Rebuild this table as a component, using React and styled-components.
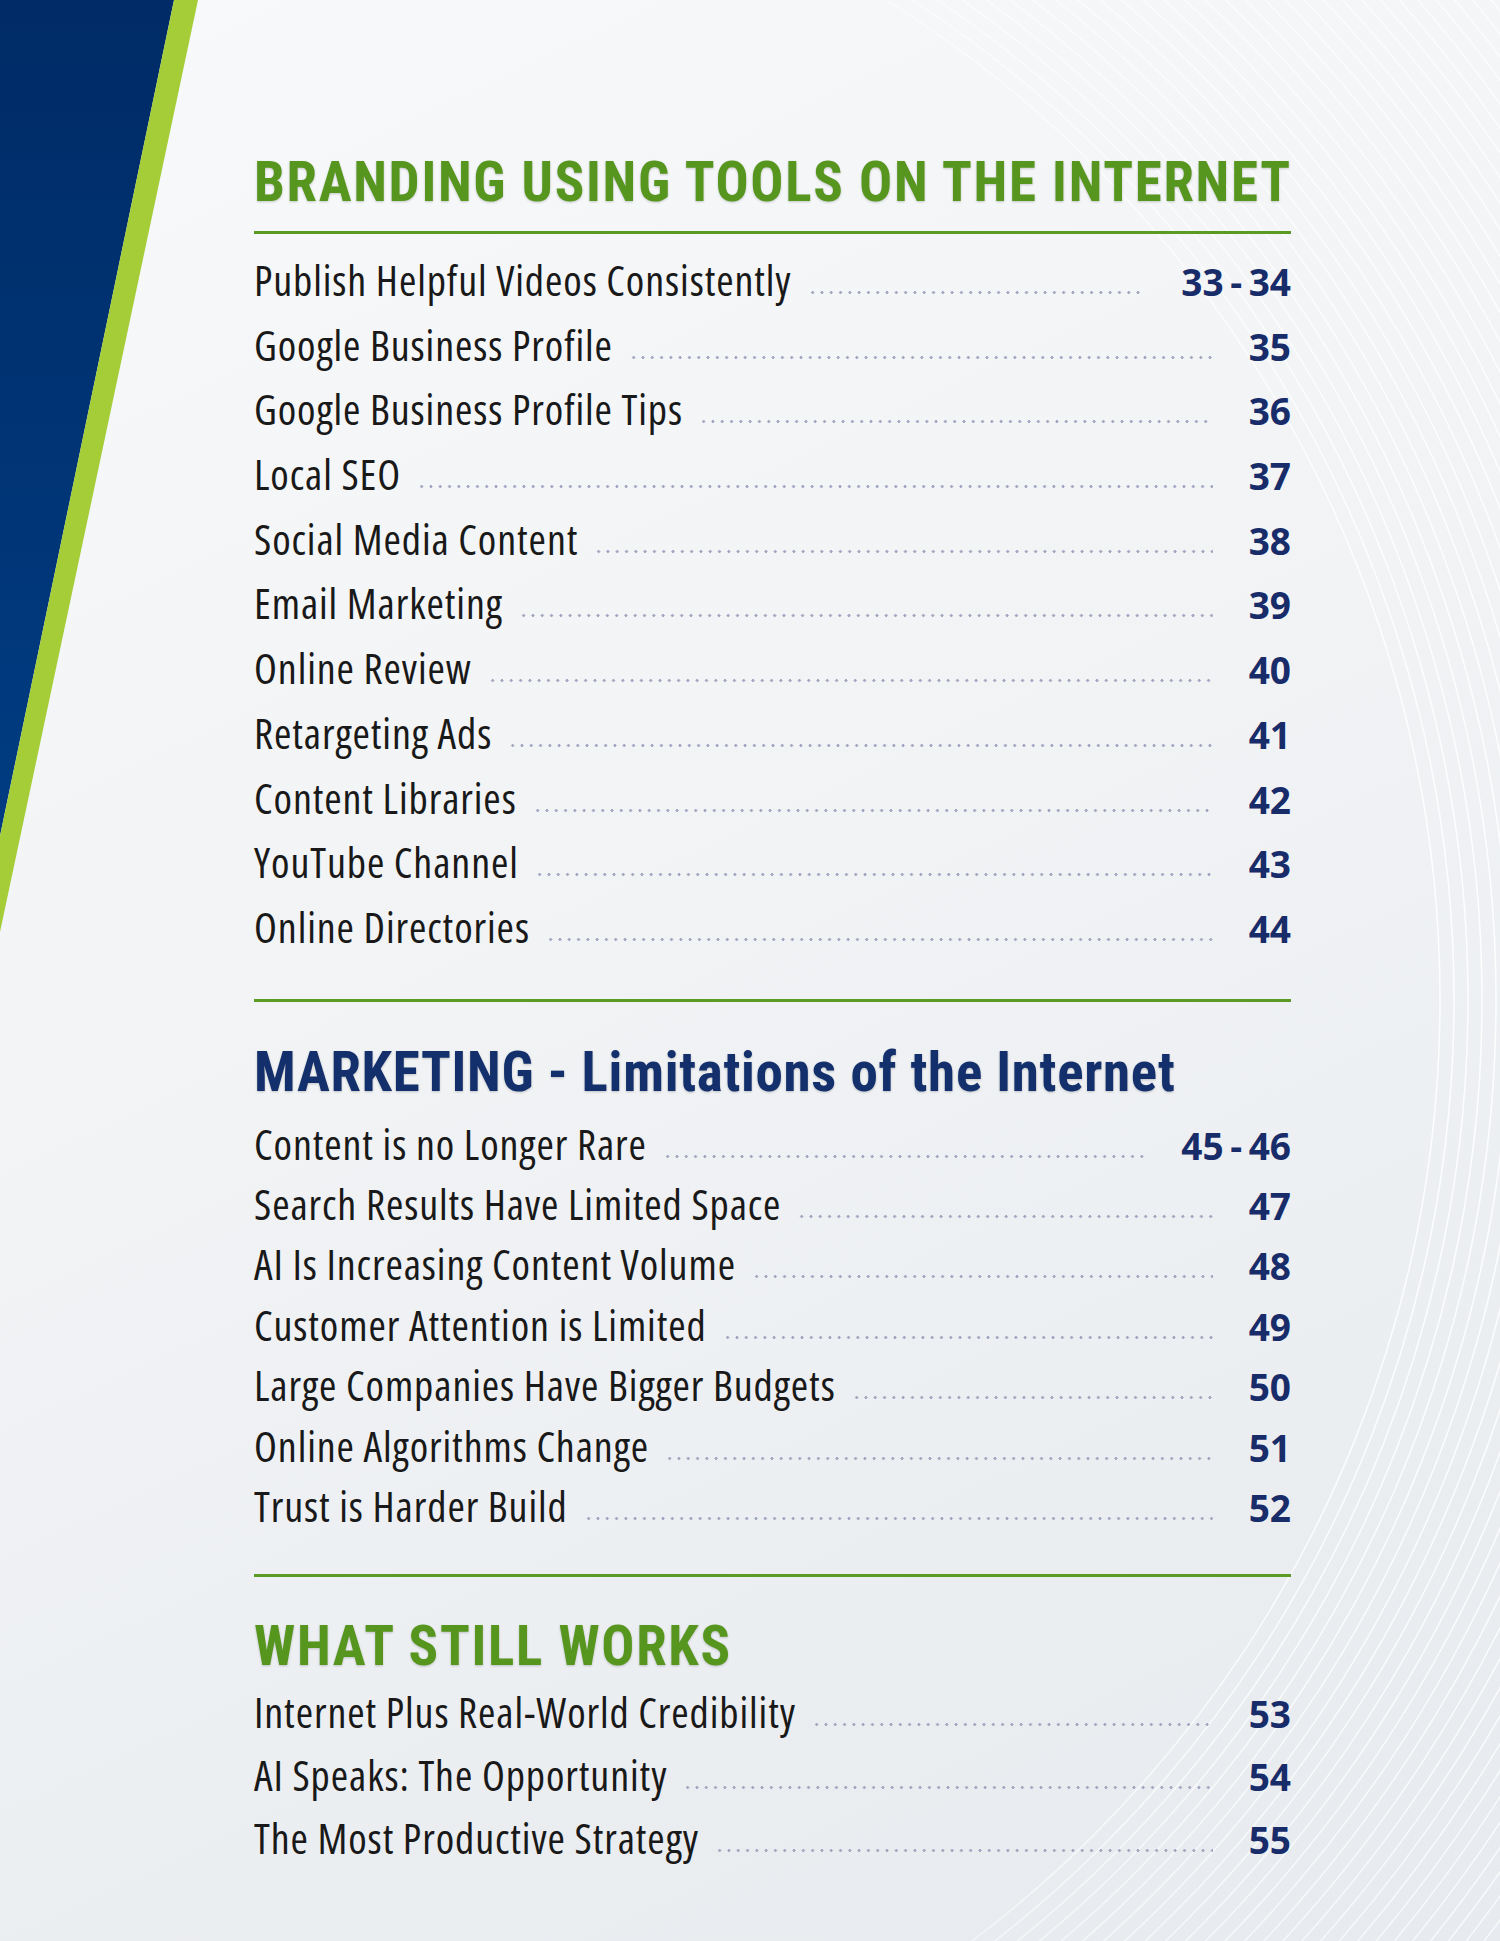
import React from 'react';
import styled, { createGlobalStyle } from 'styled-components';

const GlobalStyle = createGlobalStyle`
  html, body { margin: 0; padding: 0; }
  body { background: #eef0f3; }
`;

const Page = styled.div`
  position: relative;
  width: 1500px;
  min-height: 1941px;
  overflow: hidden;
  background: linear-gradient(155deg, #f8f9fa 0%, #f1f3f5 45%, #e7eaee 100%);
  font-family: "Open Sans", "Noto Sans", sans-serif;
`;

const Decor = styled.svg`
  position: absolute;
  top: 0;
  left: 0;
  pointer-events: none;
`;

const Content = styled.main`
  position: relative;
  width: 1037px;
  margin-left: 254px;
  padding-top: 155px;
`;

const Heading = styled.h2`
  margin: ${(p) => p.$top || 0}px 0 0;
  font-family: "Roboto Condensed", "Roboto", sans-serif;
  font-stretch: condensed;
  font-size: 55px;
  line-height: 55px;
  font-weight: 700;
  letter-spacing: ${(p) => p.$track}px;
  white-space: nowrap;
  color: ${(p) => (p.$navy ? '#13306c' : '#56961e')};
  filter: drop-shadow(0 1px 1px rgba(0, 0, 0, 0.2));
`;

const Rule = styled.hr`
  margin: ${(p) => p.$top}px 0 0;
  border: 0;
  height: 3px;
  background: #5c9b23;
`;

const List = styled.ul`
  list-style: none;
  margin: ${(p) => p.$top}px 0 0;
  padding: 0;
`;

const Row = styled.li`
  display: flex;
  align-items: baseline;
  height: ${(p) => p.$h}px;
  line-height: ${(p) => p.$h}px;
`;

const Title = styled.span`
  font-size: 42px;
  font-stretch: condensed;
  letter-spacing: 0.9px;
  color: #191919;
  white-space: nowrap;
`;

const Leader = styled.span`
  flex: 1;
  height: 7px;
  margin-left: 16px;
  background-image: radial-gradient(circle, #a3a8c2 1.3px, transparent 1.7px);
  background-size: 9.3px 7px;
  background-repeat: repeat-x;
  background-position: left center;
`;

const Pages = styled.span`
  margin-left: 36px;
  font-size: 37px;
  font-weight: 700;
  word-spacing: -3px;
  color: #182c69;
  white-space: nowrap;
`;

const sections = [
  {
    title: 'BRANDING USING TOOLS ON THE INTERNET',
    track: 1.7,
    rowH: 64.7,
    items: [
      ['Publish Helpful Videos Consistently', '33 - 34'],
      ['Google Business Profile', '35'],
      ['Google Business Profile Tips', '36'],
      ['Local SEO', '37'],
      ['Social Media Content', '38'],
      ['Email Marketing', '39'],
      ['Online Review', '40'],
      ['Retargeting Ads', '41'],
      ['Content Libraries', '42'],
      ['YouTube Channel', '43'],
      ['Online Directories', '44'],
    ],
  },
  {
    title: 'MARKETING - Limitations of the Internet',
    navy: true,
    track: 0.7,
    rowH: 60.4,
    items: [
      ['Content is no Longer Rare', '45 - 46'],
      ['Search Results Have Limited Space', '47'],
      ['AI Is Increasing Content Volume', '48'],
      ['Customer Attention is Limited', '49'],
      ['Large Companies Have Bigger Budgets', '50'],
      ['Online Algorithms Change', '51'],
      ['Trust is Harder Build', '52'],
    ],
  },
  {
    title: 'WHAT STILL WORKS',
    track: 1.7,
    rowH: 63,
    items: [
      ['Internet Plus Real-World Credibility', '53'],
      ['AI Speaks: The Opportunity', '54'],
      ['The Most Productive Strategy', '55'],
    ],
  },
];

// vertical gaps (px) for each section: rule above, heading, rule below, list
const gaps = [
  { heading: 0, rule: 21, list: 14 },
  { ruleBefore: 39, heading: 43.5, list: 13.5 },
  { ruleBefore: 38, heading: 41.5, list: 6.5 },
];

function Stripe() {
  return (
    <Decor width="220" height="960" viewBox="0 0 220 960">
      <defs>
        <linearGradient id="blue" x1="0" y1="0" x2="0" y2="1">
          <stop offset="0" stopColor="#002b66" />
          <stop offset="1" stopColor="#003c82" />
        </linearGradient>
      </defs>
      <polygon points="0,0 174,0 0,836" fill="url(#blue)" />
      <polygon points="174,0 198,0 0,932 0,836" fill="#a5cd38" />
    </Decor>
  );
}

function Arcs() {
  const radii = [];
  for (let r = 1180; r < 1760; r += 14) radii.push(r);
  return (
    <Decor width="1500" height="1941" viewBox="0 0 1500 1941">
      <defs>
        <linearGradient id="fade" x1="0" y1="0" x2="1" y2="0">
          <stop offset="0.5" stopColor="#fff" stopOpacity="0" />
          <stop offset="1" stopColor="#fff" stopOpacity="0.9" />
        </linearGradient>
      </defs>
      <g fill="none" stroke="url(#fade)" strokeWidth="1.5">
        {radii.map((r) => (
          <circle key={r} cx="260" cy="1000" r={r} />
        ))}
      </g>
    </Decor>
  );
}

export default function App() {
  return (
    <Page>
      <GlobalStyle />
      <Arcs />
      <Stripe />
      <Content>
        {sections.map((s, i) => (
          <section key={s.title}>
            {gaps[i].ruleBefore && <Rule $top={gaps[i].ruleBefore} />}
            <Heading $navy={s.navy} $track={s.track} $top={gaps[i].heading}>
              {s.title}
            </Heading>
            {gaps[i].rule && <Rule $top={gaps[i].rule} />}
            <List $top={gaps[i].list}>
              {s.items.map(([t, p]) => (
                <Row key={t} $h={s.rowH}>
                  <Title>{t}</Title>
                  <Leader />
                  <Pages>{p}</Pages>
                </Row>
              ))}
            </List>
          </section>
        ))}
      </Content>
    </Page>
  );
}
